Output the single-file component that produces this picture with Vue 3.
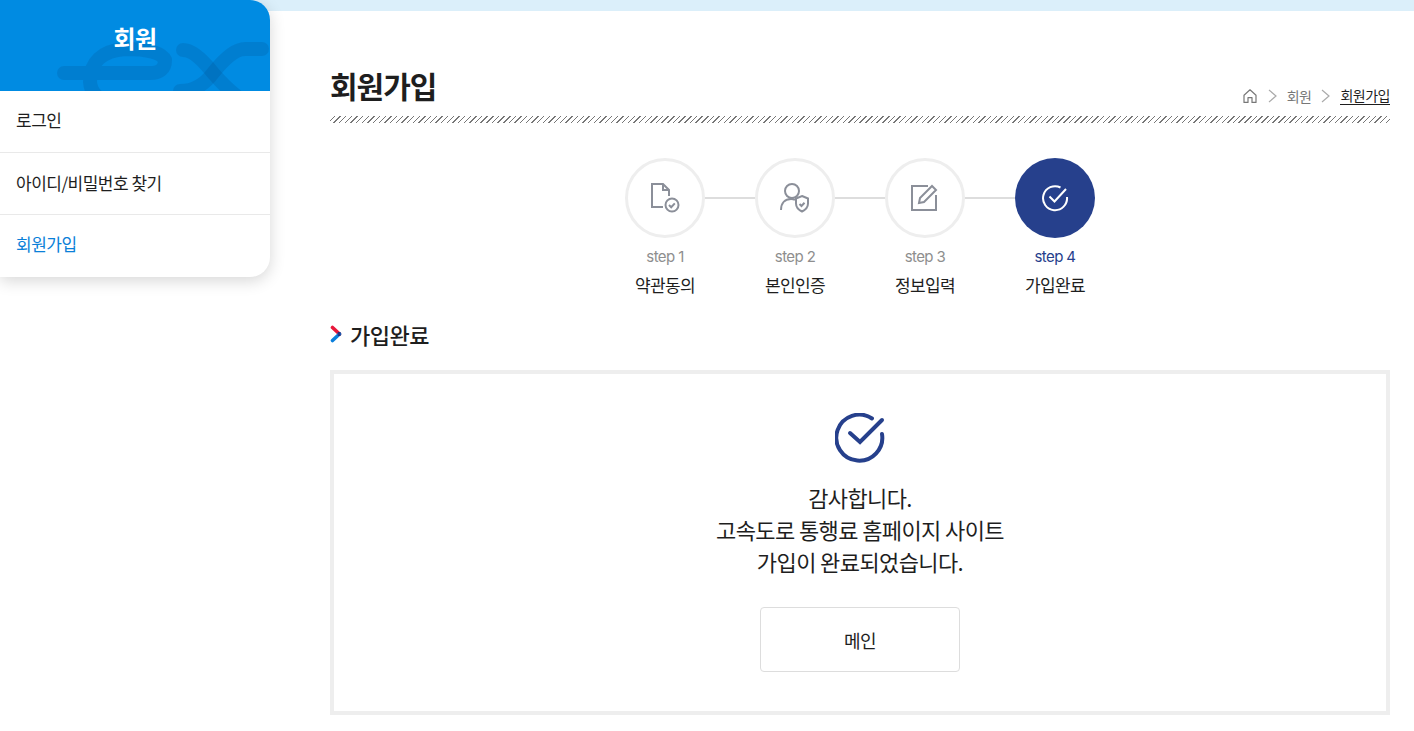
<template>
  <div class="page">
    <aside class="side">
      <div class="side-head">
        <svg class="side-logo" viewBox="0 0 270 91" width="270" height="91" fill="none">
          <path d="M64 73H150Q165 73 165 60Q160 49 125 49Q90 52 90 82Q92 105 130 105" />
          <path d="M183 50Q195 50 213 73Q232 95 250 105" />
          <path d="M262 49H245Q232 49 213 73Q200 91 180 91" />
        </svg>
        <h2>회원</h2>
      </div>
      <ul class="side-menu">
        <li v-for="item in menu" :key="item.label" :class="{ active: item.active }">{{ item.label }}</li>
      </ul>
    </aside>

    <main class="content">
      <header class="title-row">
        <h1>회원가입</h1>
        <nav class="crumbs">
          <svg width="16" height="16" viewBox="0 0 16 16" fill="none" stroke="#777" stroke-width="1.2">
            <path d="M2 7.2 8 1.8l6 5.4V14.4H10V9.6H6v4.8H2Z" stroke-linejoin="round" />
          </svg>
          <svg class="sep" width="9" height="14" viewBox="0 0 9 14" fill="none"><path d="M1 1l7 6-7 6" /></svg>
          <span>회원</span>
          <svg class="sep" width="9" height="14" viewBox="0 0 9 14" fill="none"><path d="M1 1l7 6-7 6" /></svg>
          <span class="current">회원가입</span>
        </nav>
      </header>
      <div class="hatch"></div>

      <ol class="steps">
        <li v-for="(step, i) in steps" :key="step.no" class="step" :class="{ on: i === 3 }">
          <div class="circle">
            <svg v-if="i === 0" width="32" height="32" viewBox="0 0 32 32" fill="none">
              <path d="M14 25H3V2h11l6 6v6M14 2v6h6" />
              <circle cx="23" cy="23" r="6.5" />
              <path d="M20 23l2.2 2.2 3.6-3.8" />
            </svg>
            <svg v-else-if="i === 1" width="32" height="32" viewBox="0 0 32 32" fill="none">
              <circle cx="13" cy="9" r="7" />
              <path d="M2 28c0-7 4-11 10-11 2 0 3 .3 4 1" />
              <path d="M23 14l6 2.5v5c0 4-3 6.500-6 8-3-1.500-6-4-6-8v-5Z" />
              <path d="M20.500 22l2 2 3-3.200" />
            </svg>
            <svg v-else-if="i === 2" width="32" height="32" viewBox="0 0 32 32" fill="none">
              <path d="M19 4H3v24h24V13" />
              <path d="M10 21l1-5L23 4l4 4-12 12Z" />
            </svg>
            <svg v-else width="28" height="28" viewBox="0 0 28 28" fill="none">
              <path d="M19.500 3.500A12 12 0 1 0 26 13" />
              <path d="M8.500 12.500l5 5L25 5" />
            </svg>
          </div>
          <span class="step-no">{{ step.no }}</span>
          <strong>{{ step.name }}</strong>
        </li>
      </ol>

      <h3 class="section-title">
        <svg width="12" height="18" viewBox="0 0 12 18" fill="none" stroke-width="3.600" stroke-linecap="round">
          <path d="M2.500 2.500 9.500 9" stroke="#e8173a" />
          <path d="M9.500 9 2.500 15.500" stroke="#0a7fdc" />
          <path d="M8.500 8h1v2h-1" stroke="#27327f" stroke-width="2" />
        </svg>
        가입완료
      </h3>

      <section class="done-box">
        <svg width="50" height="50" viewBox="0 0 50 50" fill="none">
          <path d="M37 5.500A23 23 0 1 0 47 21" />
          <path d="M15 20l10 9L47 7" />
        </svg>
        <p>감사합니다.<br />고속도로 통행료 홈페이지 사이트<br />가입이 완료되었습니다.</p>
        <button type="button">메인</button>
      </section>
    </main>
  </div>
</template>

<script setup>
const menu = [
  { label: '로그인' },
  { label: '아이디/비밀번호 찾기' },
  { label: '회원가입', active: true },
]

const steps = [
  { no: 'step 1', name: '약관동의' },
  { no: 'step 2', name: '본인인증' },
  { no: 'step 3', name: '정보입력' },
  { no: 'step 4', name: '가입완료' },
]
</script>

<style>
html,
body {
  margin: 0;
  overflow: hidden;
  background: #fff;
}
</style>

<style scoped>
.page {
  display: flex;
  align-items: flex-start;
  height: 731px;
  overflow: hidden;
  background: linear-gradient(#dbeffa 11px, #fff 11px);
  color: #1e1e1e;
  font-family: "Noto Sans CJK KR", "Noto Sans", sans-serif;
}

.side {
  flex: none;
  width: 270px;
  border-radius: 0 20px 20px 0;
  background: #fff;
  box-shadow: 0 4px 16px rgba(0, 0, 0, 0.16);
  clip-path: inset(0 -30px -30px -30px);
}

.side-head {
  position: relative;
  height: 91px;
  overflow: hidden;
  border-top-right-radius: 20px;
  background: #008be2;
}

.side-logo {
  position: absolute;
  left: 0;
  top: 0;
}

.side-logo path {
  stroke: rgba(0, 60, 120, 0.16);
  stroke-width: 14;
  stroke-linecap: round;
}

.side-head h2 {
  position: relative;
  margin: 0;
  padding-top: 20px;
  text-align: center;
  color: #fff;
  font-size: 24px;
  line-height: 36px;
  font-weight: 700;
  letter-spacing: -0.5px;
}

.side-menu {
  margin: 0;
  padding: 0;
  list-style: none;
}

.side-menu li {
  height: 61px;
  padding-left: 16px;
  border-bottom: 1px solid #e9e9e9;
  font-size: 17px;
  line-height: 57px;
  letter-spacing: -0.5px;
}

.side-menu li:nth-child(2) {
  line-height: 59px;
}

.side-menu li:last-child {
  border-bottom: 0;
  height: 62px;
}

.side-menu .active {
  color: #0a80d8;
}

.content {
  flex: none;
  width: 1060px;
  margin-left: 60px;
  padding-top: 63px;
}

.title-row {
  display: flex;
  align-items: flex-end;
  justify-content: space-between;
  height: 44px;
}

h1 {
  margin: 0;
  font-size: 30px;
  line-height: 44px;
  font-weight: 700;
  letter-spacing: -1px;
}

.crumbs {
  display: flex;
  align-items: center;
  gap: 10px;
  padding-bottom: 1px;
  color: #777;
  font-size: 14px;
  line-height: 20px;
  letter-spacing: -0.5px;
}

.sep path {
  stroke: #aaa;
  stroke-width: 1.2;
}

.current {
  color: #1e1e1e;
  border-bottom: 1px solid #1e1e1e;
  line-height: 17px;
}

.hatch {
  height: 7px;
  margin-top: 9px;
  background: repeating-linear-gradient(135deg, #fff 0 3px, #777 3px 4px);
}

.steps {
  display: flex;
  justify-content: center;
  gap: 50px;
  margin: 35px 0 0;
  padding: 0;
  list-style: none;
}

.step {
  position: relative;
  display: flex;
  flex-direction: column;
  align-items: center;
  width: 80px;
}

.step + .step::before {
  content: "";
  position: absolute;
  top: 39px;
  right: 80px;
  width: 50px;
  height: 2px;
  background: #ddd;
}

.circle {
  display: flex;
  align-items: center;
  justify-content: center;
  box-sizing: border-box;
  width: 80px;
  height: 80px;
  border: 3px solid #eee;
  border-radius: 50%;
}

.circle svg {
  stroke: #8b8f99;
  stroke-width: 2;
}

.on .circle {
  border: 0;
  background: #26408c;
}

.on .circle svg {
  stroke: #fff;
}

.step-no {
  margin-top: 9px;
  color: #8e8e8e;
  font-family: Inter, sans-serif;
  font-size: 15px;
  line-height: 20px;
  letter-spacing: -0.6px;
  white-space: nowrap;
}

.on .step-no {
  color: #26408c;
}

.step strong {
  margin-top: 5px;
  font-size: 17px;
  line-height: 26px;
  font-weight: 400;
  letter-spacing: -0.6px;
  white-space: nowrap;
}

.section-title {
  display: flex;
  align-items: center;
  gap: 8px;
  height: 34px;
  margin: 19px 0 19px;
  font-size: 22px;
  font-weight: 500;
  letter-spacing: -0.5px;
}

.done-box {
  display: flex;
  flex-direction: column;
  align-items: center;
  box-sizing: border-box;
  height: 345px;
  padding-top: 39px;
  border: 4px solid #eee;
}

.done-box svg {
  stroke: #26408c;
  stroke-width: 4;
  stroke-linecap: round;
}

.done-box p {
  margin: 18px 0 0;
  text-align: center;
  font-size: 22px;
  line-height: 32px;
  letter-spacing: -0.6px;
}

.done-box button {
  width: 200px;
  height: 65px;
  margin-top: 30px;
  border: 1px solid #ddd;
  border-radius: 4px;
  background: #fff;
  color: #1e1e1e;
  font-family: inherit;
  font-size: 18px;
  letter-spacing: -0.5px;
}
</style>
